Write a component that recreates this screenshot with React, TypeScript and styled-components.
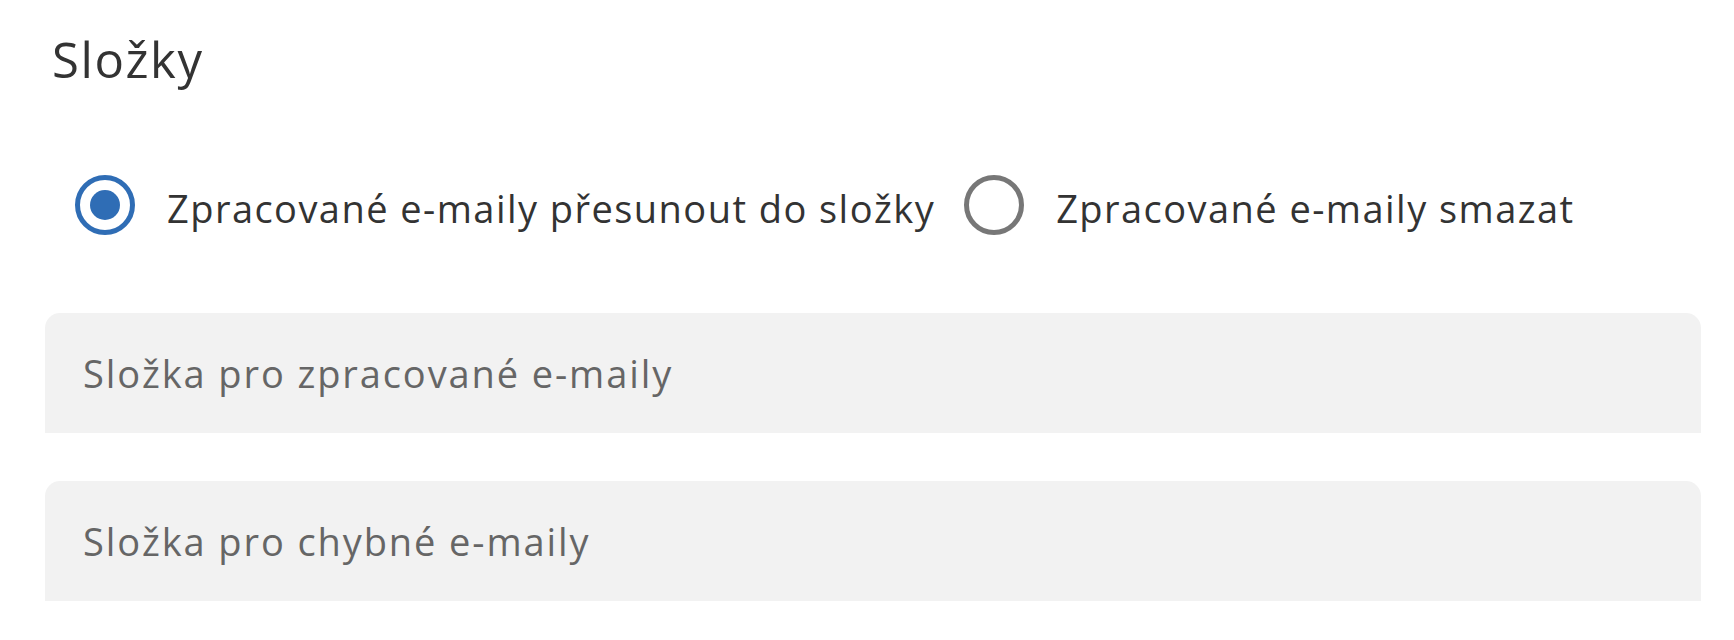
import * as React from 'react';
import styled, { createGlobalStyle } from 'styled-components';

const GlobalStyle = createGlobalStyle`
    html, body {
        margin: 0;
        padding: 0;
        background: #ffffff;
    }
    body {
        font-family: 'Open Sans', 'Noto Sans', sans-serif;
        color: #333333;
    }
`;

const Page = styled.div`
    display: flex;
    flex-direction: column;
    padding: 31px 33px 0 45px;
`;

const Title = styled.h2`
    margin: 0 0 0 7px;
    font-size: 49px;
    line-height: 56px;
    font-weight: 400;
    letter-spacing: 1.6px;
    color: #333333;
`;

const RadioGroup = styled.div`
    display: flex;
    align-items: center;
    margin-top: 88px;
    padding-left: 30px;
    height: 60px;
`;

const RadioItem = styled.label`
    display: flex;
    align-items: center;
    gap: 32px;
    margin-right: 29px;
    cursor: pointer;
`;

const RadioCircle = styled.span<{ checked: boolean }>`
    box-sizing: border-box;
    width: 60px;
    height: 60px;
    border-radius: 50%;
    border: 5px solid ${({ checked }) => checked ? '#2f6db5' : '#777777'};
    display: flex;
    align-items: center;
    justify-content: center;
    &::after {
        content: '';
        width: 30px;
        height: 30px;
        border-radius: 50%;
        background: #2f6db5;
        display: ${({ checked }) => checked ? 'block' : 'none'};
    }
`;

const RadioLabel = styled.span`
    font-size: 38px;
    line-height: 60px;
    padding-top: 6px;
    letter-spacing: 1.45px;
    color: #333333;
`;

const Fields = styled.div`
    display: flex;
    flex-direction: column;
    gap: 48px;
    margin-top: 78px;
`;

const Field = styled.div`
    height: 120px;
    background: #f2f2f2;
    border-radius: 15px 15px 0 0;
    display: flex;
    align-items: center;
    padding-left: 38px;
`;

const Placeholder = styled.span`
    font-size: 38px;
    letter-spacing: 1.9px;
    color: #666666;
`;

const options = [
    { id: 'move', label: 'Zpracované e-maily přesunout do složky' },
    { id: 'delete', label: 'Zpracované e-maily smazat' },
];

export default function App() {
    const [selected, setSelected] = React.useState<string>('move');

    return (
        <>
            <GlobalStyle />
            <Page>
                <Title>Složky</Title>
                <RadioGroup>
                    {options.map((o) => (
                        <RadioItem key={o.id} onClick={() => setSelected(o.id)}>
                            <RadioCircle checked={selected === o.id} />
                            <RadioLabel>{o.label}</RadioLabel>
                        </RadioItem>
                    ))}
                </RadioGroup>
                <Fields>
                    <Field><Placeholder>Složka pro zpracované e-maily</Placeholder></Field>
                    <Field><Placeholder>Složka pro chybné e-maily</Placeholder></Field>
                </Fields>
            </Page>
        </>
    );
}
